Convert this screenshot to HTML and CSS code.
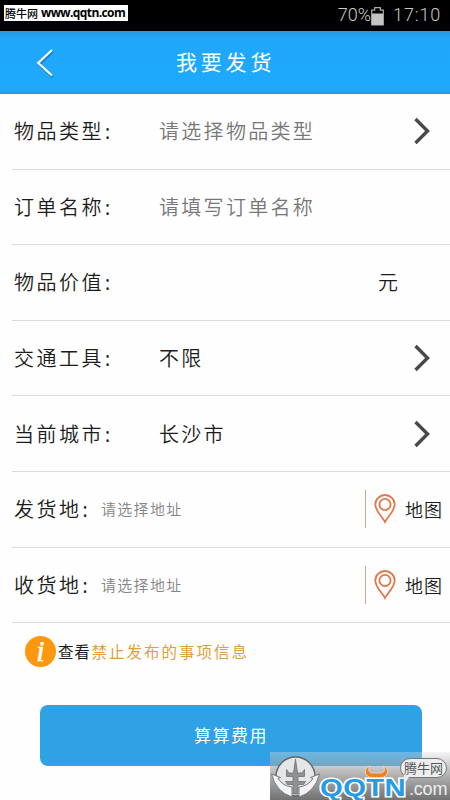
FILE: index.html
```html
<!DOCTYPE html>
<html lang="zh-CN">
<head>
<meta charset="utf-8">
<title>我要发货</title>
<link rel="stylesheet" href="styles.css">
</head>
<body>
<div class="screen">
  <div class="status">
    <div class="site-tag"><span class="site-name">腾牛网</span><span>www.qqtn.com</span></div>
    <div class="status-right">
      <span class="percent">70%</span>
      <svg class="battery" width="13" height="19" viewBox="0 0 13 19"><path d="M.7 18V3.200H3.700V.7H9.300V3.200H12.300V18Z" fill="none" stroke="#aaa" stroke-width="1.200"/><path d="M1 6.500H12V18H1Z" fill="#c4c4c4"/></svg>
      <span class="clock">17:10</span>
    </div>
  </div>
  <header class="bar">
    <svg class="back" width="18" height="30" viewBox="0 0 18 30"><path d="M16 2.500 2.500 15.500 16 28" fill="none" stroke="#1680c4" stroke-width="2.500" transform="translate(.6 1)"/><path d="M16 2 2.200 15 16 27.500" fill="none" stroke="#fff" stroke-width="2.200"/></svg>
    <h1>我要发货</h1>
  </header>
  <main class="form">
    <div class="row"><span class="label">物品类型<i>:</i></span><span class="value hint">请选择物品类型</span><svg class="arrow" width="16" height="28" viewBox="0 0 16 28"><path d="M1.500 2 13.500 14 1.500 26" fill="none" stroke="#484848" stroke-width="3.400"/></svg></div>
    <div class="row"><span class="label">订单名称<i>:</i></span><span class="value hint">请填写订单名称</span></div>
    <div class="row"><span class="label">物品价值<i>:</i></span><span class="unit">元</span></div>
    <div class="row"><span class="label">交通工具<i>:</i></span><span class="value">不限</span><svg class="arrow" width="16" height="28" viewBox="0 0 16 28"><path d="M1.500 2 13.500 14 1.500 26" fill="none" stroke="#484848" stroke-width="3.400"/></svg></div>
    <div class="row"><span class="label">当前城市<i>:</i></span><span class="value">长沙市</span><svg class="arrow" width="16" height="28" viewBox="0 0 16 28"><path d="M1.500 2 13.500 14 1.500 26" fill="none" stroke="#484848" stroke-width="3.400"/></svg></div>
    <div class="row"><span class="label short">发货地<i>:</i></span><span class="address">请选择地址</span><div class="map"><svg width="22" height="30" viewBox="0 0 22 30"><g fill="none" stroke="#df7849" stroke-width="1.800"><path d="M11 28C9 23.500 1.300 17.500 1.300 10.500A9.700 9.500 0 0 1 20.700 10.500C20.700 17.500 13 23.500 11 28Z"/><circle cx="11" cy="10.500" r="5.600"/></g></svg><span>地图</span></div></div>
    <div class="row"><span class="label short">收货地<i>:</i></span><span class="address">请选择地址</span><div class="map"><svg width="22" height="30" viewBox="0 0 22 30"><g fill="none" stroke="#df7849" stroke-width="1.800"><path d="M11 28C9 23.500 1.300 17.500 1.300 10.500A9.700 9.500 0 0 1 20.700 10.500C20.700 17.500 13 23.500 11 28Z"/><circle cx="11" cy="10.500" r="5.600"/></g></svg><span>地图</span></div></div>
  </main>
  <div class="notice"><span class="info">i</span><span class="look">查看</span><span class="banned">禁止发布的事项信息</span></div>
  <button class="submit">算算费用</button>
  <div class="mark">
    <svg class="emblem" width="52" height="46" viewBox="0 0 52 46">
      <circle cx="25.500" cy="22.500" r="19.500" fill="#e4e6e8" stroke="#636669" stroke-width="1.400"/>
      <path d="M1.500 20 10.500 23.500 8 24.500Q13 32 22 33V43Q6 38 1.500 20ZM49.500 20 40.500 23.500 43 24.500Q38 32 29 33V43Q45 38 49.500 20Z" fill="#f3f4f5" stroke="#77797c" stroke-width="1"/>
      <path d="M25.500 5 27.500 19H32L34.500 15.500V22.500H28V27.500H35.500L33.500 30.500H28V40H23V30.500H17.500L15.500 27.500H23V22.500H16.500V15.500L19 19H23.500Z" fill="#8f9295" stroke="#6d7073" stroke-width=".8"/>
    </svg>
    <span class="brand">QQTN</span><span class="domain">.com</span>
    <svg class="horns" width="25" height="14" viewBox="0 0 25 14"><path d="M6 1C-1 3 0 12.500 8 12.500H17C25 12.500 26 3 19 1 22 4.500 20 8 16.500 8H8.500C5 8 3.500 4.500 6 1Z" fill="#e9812b" stroke="#f4e5d8" stroke-width=".8"/></svg>
    <span class="bubble">腾牛网</span>
  </div>
</div>
</body>
</html>
```
FILE: styles.css
```css
* { box-sizing: border-box; }
body { margin: 0; font-family: "Noto Sans CJK SC", sans-serif; }
.screen { position: relative; width: 450px; height: 800px; overflow: hidden; background: #fefefe; color: #1c1c1c; }
.status { display: flex; justify-content: space-between; height: 31px; padding: 5px 7px 0 4px; background: #000; }
.site-tag { display: flex; align-items: center; gap: 3px; width: 124px; height: 16px; padding-left: 1px; background: #fff; color: #000; font: bold 12px/16px "Open Sans", sans-serif; letter-spacing: -.6px; white-space: nowrap; }
.site-name { font: 500 11px/16px "Noto Sans CJK SC", sans-serif; letter-spacing: 0; }
.status-right { display: flex; height: 20px; align-items: center; color: #c8c8c8; font: 300 18px/20px Roboto, sans-serif; }
.percent { letter-spacing: 0; }
.battery { margin: 2px 9px 0 0; }
.clock { letter-spacing: .9px; width: 50px; }
.bar { display: flex; align-items: center; height: 63px; padding-left: 36px; background: linear-gradient(#2997df, #1fa8fb 14%, #1fa9fc 95%, #209ce8); }
h1 { margin: 0 0 3px 122px; color: #fff; font-size: 21px; font-weight: 400; letter-spacing: 3.800px; line-height: 30px; }
.row { display: flex; align-items: center; height: 75.600px; margin-left: 12px; border-bottom: 1.600px solid #dcdcdc; font-size: 20px; font-weight: 350; line-height: 30px; letter-spacing: 2.500px; white-space: nowrap; }
.label { width: 147px; padding-left: 2px; }
.label i { font: 19px/20px "Noto Sans", sans-serif; margin-left: 1px; }
.short { width: 89px; }
.hint { color: #777; }
.value { letter-spacing: 2.300px; }
.arrow { margin-left: auto; margin-right: 20px; }
.unit { margin-left: 219px; }
.address { color: #858585; font-size: 15px; letter-spacing: 1.300px; }
.map { display: flex; align-items: center; height: 38px; margin-left: auto; padding-left: 8px; border-left: 1px solid #d1a396; width: 85px; font-size: 18px; letter-spacing: 1px; }
.map span { margin-left: 9px; }
.notice { display: flex; align-items: center; height: 56px; padding-left: 25px; font-size: 15.500px; font-weight: 400; white-space: nowrap; }
.info { width: 31px; height: 31px; border-radius: 50%; background: #fb980f; color: #fff; text-align: center; font: italic 30px/29px "Liberation Serif", serif; -webkit-text-stroke: .6px #fff; }
.look { margin-left: 2px; letter-spacing: .8px; }
.banned { margin-left: 1px; color: #dfa03b; letter-spacing: 2px; }
.submit { display: block; width: 382px; height: 61px; margin: 26px 0 0 40px; padding: 0 0 3px; border: 0; border-radius: 8px; background: #2ea2e5; color: #fff; font: 400 17px "Noto Sans CJK SC", sans-serif; letter-spacing: 1.500px; }
.mark { position: absolute; left: 270px; top: 752px; width: 180px; height: 48px; background: linear-gradient(rgba(225,225,225,.35), rgba(145,145,145,.72) 50%, rgba(105,105,105,.94)); }
.emblem { position: absolute; left: 0; top: 2px; }
.horns { position: absolute; left: 94px; top: 13px; }
.brand { position: absolute; left: 50px; top: 24px; color: #259ce5; font: bold 24px/23px "Liberation Sans", sans-serif; letter-spacing: .3px; transform: scaleX(1.22); transform-origin: left; -webkit-text-stroke: 3px #fff; paint-order: stroke fill; }
.domain { position: absolute; left: 139px; top: 26px; color: #eee; font: 18px/22px "Liberation Sans", sans-serif; letter-spacing: -.2px; }
.bubble { position: absolute; left: 130px; top: 6px; width: 47px; height: 20px; border: 1px solid #777; border-radius: 10px; background: #eceeef; color: #555; text-align: center; font-size: 13px; line-height: 18px; }
.bubble::after { content: ""; position: absolute; left: 3px; top: 16px; border: 3px solid transparent; border-top: 5px solid #eceeef; border-left-color: #eceeef; }
```
